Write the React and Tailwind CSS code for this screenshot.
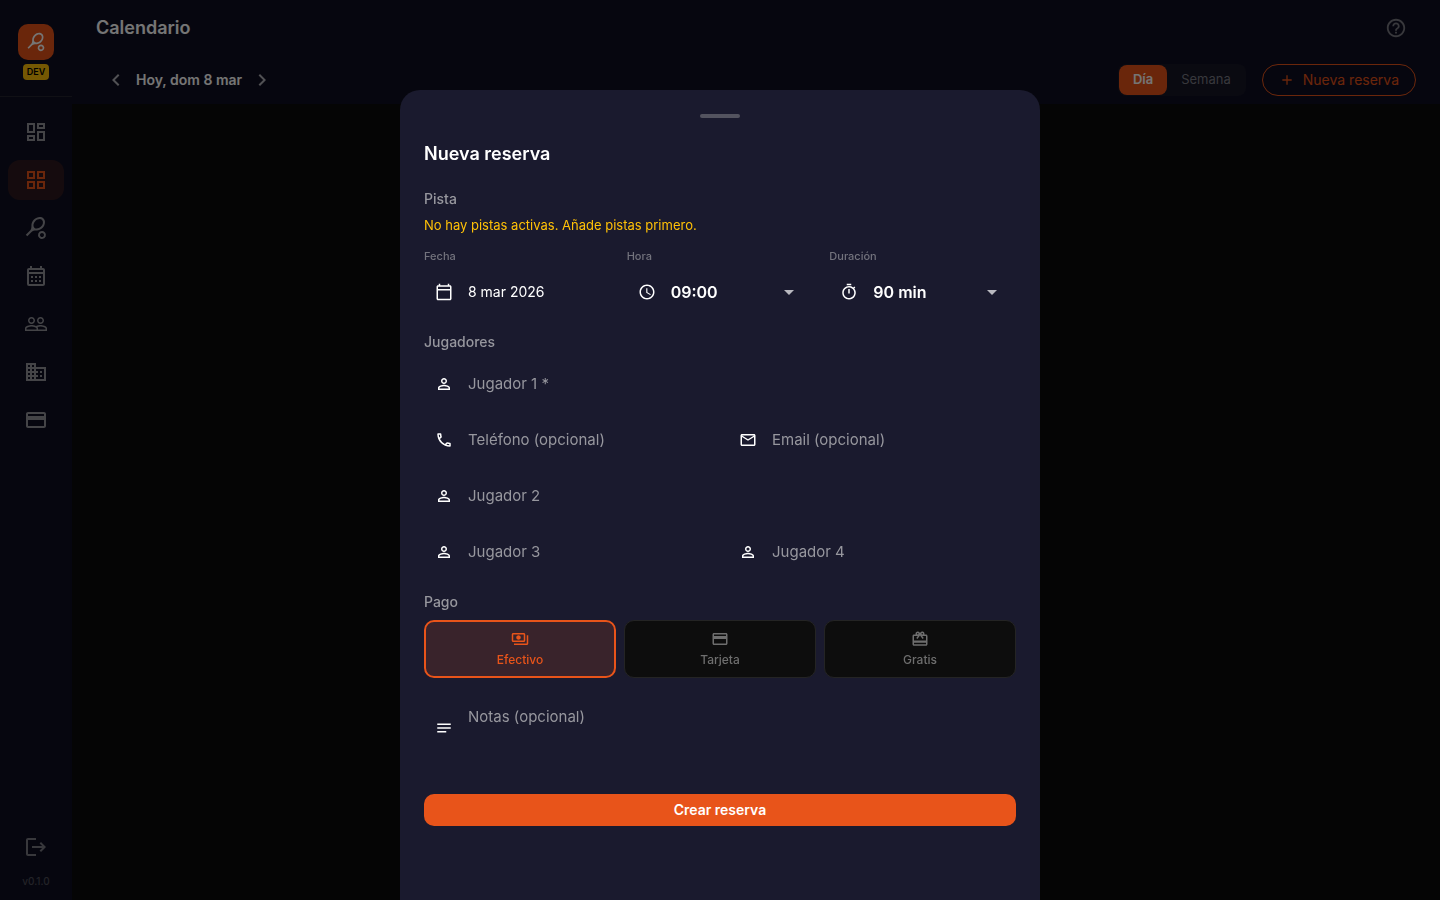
import React, { useState } from 'react';
import {
    MdAccessTime,
    MdAdd,
    MdArrowDropDown,
    MdChevronLeft,
    MdChevronRight,
    MdHelpOutline,
    MdLogout,
    MdNotes,
    MdOutlineCalendarMonth,
    MdOutlineCalendarToday,
    MdOutlineCreditCard,
    MdOutlineDashboard,
    MdOutlineDomain,
    MdOutlineEmail,
    MdOutlineGridView,
    MdOutlinePayments,
    MdOutlinePhone,
    MdOutlineRedeem,
    MdOutlineTimer,
    MdPeopleOutline,
    MdPersonOutline,
    MdSportsTennis,
} from 'react-icons/md';

const NAV = [
    { label: 'Panel', icon: MdOutlineDashboard },
    { label: 'Calendario', icon: MdOutlineGridView, active: true },
    { label: 'Pistas', icon: MdSportsTennis },
    { label: 'Reservas', icon: MdOutlineCalendarMonth },
    { label: 'Jugadores', icon: MdPeopleOutline },
    { label: 'Club', icon: MdOutlineDomain },
    { label: 'Pagos', icon: MdOutlineCreditCard },
];

const PAYMENTS = [
    { id: 'cash', label: 'Efectivo', icon: MdOutlinePayments },
    { id: 'card', label: 'Tarjeta', icon: MdOutlineCreditCard },
    { id: 'free', label: 'Gratis', icon: MdOutlineRedeem },
];

const Sidebar = () => (
    <aside className="w-18 shrink-0 flex flex-col bg-[#0f0f21]">
        <div className="flex flex-col items-center gap-1 pt-6 pb-4 border-b border-[#23232f]">
            <div className="size-9 rounded-[10px] bg-[#e8541a] flex items-center justify-center">
                <MdSportsTennis className="size-5" />
            </div>
            <span className="h-4 px-1 rounded-sm bg-[#ffc107] text-black text-[9px] leading-4 font-semibold">DEV</span>
        </div>

        <nav className="flex flex-col gap-2 px-2 pt-[15px] pb-4">
            {NAV.map(({ label, icon: Icon, active }) => (
                <a
                    key={label}
                    href="#"
                    aria-label={label}
                    className={`h-10 rounded-xl flex items-center justify-center ${
                        active ? 'bg-[#e8541a]/15 text-[#e8541a]' : 'text-[#94949c]'
                    }`}
                >
                    <Icon className="size-6" />
                </a>
            ))}
        </nav>

        <div className="mt-auto flex flex-col items-center gap-4 pb-[13px]">
            <button type="button" aria-label="Cerrar sesión" className="text-[#7a7a83]">
                <MdLogout className="size-6" />
            </button>
            <span className="text-[10px] leading-3 font-medium text-[#4c4c58]">v0.1.0</span>
        </div>
    </aside>
);

const Header = () => (
    <header className="bg-[#0f0f21]">
        <div className="h-14 pl-6 pr-8 flex items-center justify-between">
            <h1 className="text-lg font-semibold">Calendario</h1>
            <button type="button" aria-label="Ayuda" className="text-[#7a7a83]">
                <MdHelpOutline className="size-6 p-px" />
            </button>
        </div>
        <div className="h-12 px-6 flex items-center justify-between">
            <div className="flex items-center px-2">
                <button type="button" aria-label="Día anterior" className="text-[#b0b0b8]">
                    <MdChevronLeft className="size-6" />
                </button>
                <span className="px-2 text-sm font-semibold">Hoy, dom 8 mar</span>
                <button type="button" aria-label="Día siguiente" className="text-[#b0b0b8]">
                    <MdChevronRight className="size-6" />
                </button>
            </div>
            <div className="flex items-center gap-4">
                <div className="h-8 flex rounded-lg bg-[#161626] p-px text-[13px]">
                    <button type="button" className="px-3.5 rounded-lg bg-[#e8541a] font-semibold">Día</button>
                    <button type="button" className="px-3.5 text-[#7a7a83]">Semana</button>
                </div>
                <button
                    type="button"
                    className="h-8 px-4 flex items-center gap-2 rounded-full border border-[#e8541a] text-[#e8541a] text-sm"
                >
                    <MdAdd className="size-4" />
                    Nueva reserva
                </button>
            </div>
        </div>
    </header>
);

const Field = ({ icon: Icon, children }) => (
    <div className="h-12 pl-2.5 pr-3 flex items-center gap-3.5">
        <span className="w-5 shrink-0 flex justify-center">
            <Icon className="size-[18px]" />
        </span>
        {children}
    </div>
);

const TextField = ({ icon, label, type = 'text' }) => (
    <Field icon={icon}>
        <input
            type={type}
            aria-label={label}
            placeholder={label}
            className="w-full min-w-0 bg-transparent outline-none text-[15px] placeholder:text-[#97979e]"
        />
    </Field>
);

const SelectField = ({ id, icon, label, options }) => (
    <div>
        <label htmlFor={id} className="block text-[11px] leading-4 font-medium text-[#73737d] mb-1">{label}</label>
        <Field icon={icon}>
            <select id={id} className="flex-1 min-w-0 appearance-none bg-transparent outline-none text-base font-semibold">
                {options.map(o => <option key={o}>{o}</option>)}
            </select>
            <MdArrowDropDown className="size-6 shrink-0 text-[#b9b9c0] pointer-events-none" />
        </Field>
    </div>
);

const BookingSheet = () => {
    const [payment, setPayment] = useState('cash');

    return (
        <form
            role="dialog"
            aria-labelledby="sheet-title"
            onSubmit={e => e.preventDefault()}
            className="w-full max-w-160 h-[90%] overflow-y-auto rounded-t-[20px] bg-[#1a1a2e] px-6 pt-6"
        >
            <div className="w-10 h-1 mx-auto rounded-full bg-[#53535f]" />

            <h2 id="sheet-title" className="mt-6 text-lg leading-6 font-semibold">Nueva reserva</h2>

            <h3 className="mt-[23px] text-sm font-medium text-[#97979e]">Pista</h3>
            <p className="mt-2 text-[13px] leading-4 text-[#ffc107]">No hay pistas activas. Añade pistas primero.</p>

            <div className="mt-[15px] grid grid-cols-3 gap-4">
                <div>
                    <label htmlFor="date" className="block text-[11px] leading-4 font-medium text-[#73737d] mb-1">Fecha</label>
                    <Field icon={MdOutlineCalendarToday}>
                        <button id="date" type="button" className="flex-1 text-left text-sm">8 mar 2026</button>
                    </Field>
                </div>
                <SelectField id="time" icon={MdAccessTime} label="Hora" options={['09:00', '09:30', '10:00', '10:30']} />
                <SelectField id="length" icon={MdOutlineTimer} label="Duración" options={['90 min', '60 min', '120 min']} />
            </div>

            <h3 className="mt-4 mb-2 text-sm font-medium text-[#97979e]">Jugadores</h3>
            <div className="flex flex-col gap-2">
                <TextField icon={MdPersonOutline} label="Jugador 1 *" />
                <div className="grid grid-cols-2 gap-4">
                    <TextField icon={MdOutlinePhone} label="Teléfono (opcional)" type="tel" />
                    <TextField icon={MdOutlineEmail} label="Email (opcional)" type="email" />
                </div>
                <TextField icon={MdPersonOutline} label="Jugador 2" />
                <div className="grid grid-cols-2 gap-4">
                    <TextField icon={MdPersonOutline} label="Jugador 3" />
                    <TextField icon={MdPersonOutline} label="Jugador 4" />
                </div>
            </div>

            <h3 className="mt-4 mb-2 text-sm font-medium text-[#97979e]">Pago</h3>
            <div className="grid grid-cols-3 gap-2">
                {PAYMENTS.map(({ id, label, icon: Icon }) => (
                    <button
                        key={id}
                        type="button"
                        aria-pressed={payment === id}
                        onClick={() => setPayment(id)}
                        className={`h-[58px] flex flex-col items-center justify-center gap-1 rounded-[10px] text-xs font-medium ${
                            payment === id
                                ? 'border-2 border-[#e8541a] bg-[#39232b] text-[#e8541a]'
                                : 'border border-[#242424] bg-[#0d0d0d] text-[#6e6e6e]'
                        }`}
                    >
                        <Icon className="size-[18px]" />
                        {label}
                    </button>
                ))}
            </div>

            <div className="mt-6 pl-2.5 pr-3 flex items-center gap-3.5">
                <span className="w-5 shrink-0 flex justify-center">
                    <MdNotes className="size-[18px]" />
                </span>
                <textarea
                    rows={2}
                    aria-label="Notas"
                    placeholder="Notas (opcional)"
                    className="w-full h-13 py-[5px] resize-none bg-transparent outline-none text-[15px] leading-5 placeholder:text-[#97979e]"
                />
            </div>

            <button type="submit" className="mt-10 w-full h-8 rounded-[10px] bg-[#e8541a] text-sm font-semibold">
                Crear reserva
            </button>
        </form>
    );
};

const App = () => (
    <div className="min-h-screen flex bg-[#0d0d0d] text-white font-['Inter',sans-serif]">
        <Sidebar />
        <main className="flex-1">
            <Header />
        </main>

        {/* Modal backdrop */}
        <div className="fixed inset-0 flex items-end justify-center bg-black/54">
            <BookingSheet />
        </div>
    </div>
);

export default App;
